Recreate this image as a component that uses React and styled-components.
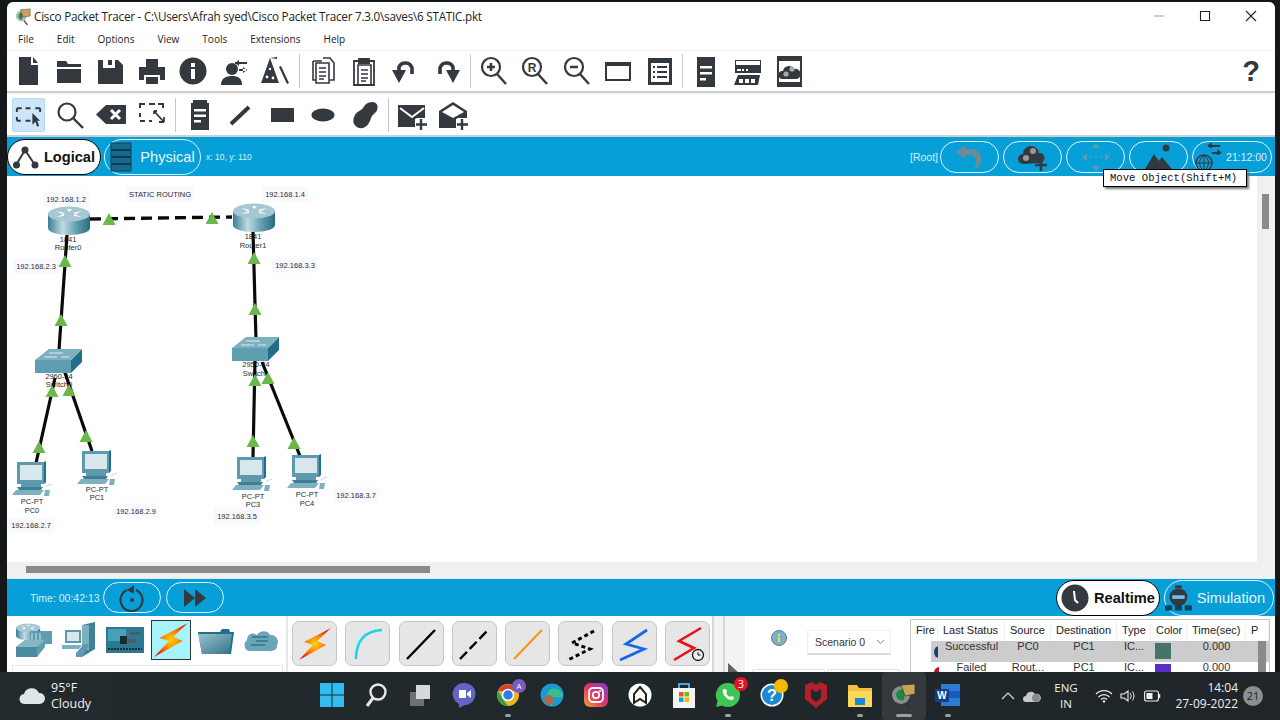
import React from 'react'
import styled, { createGlobalStyle } from 'styled-components'

const INK = '#33393f'
const BLUE = '#079fd8'
const UI = '"Open Sans", "Noto Sans", sans-serif'
const ARIAL = '"Liberation Sans", Arial, sans-serif'

const GlobalStyle = createGlobalStyle`
    html, body { margin: 0; padding: 0; background: #14181b; overflow: hidden; }
    * { box-sizing: border-box; }
`

const Screen = styled.div`
    position: relative;
    width: 1280px;
    height: 720px;
    display: flex;
    flex-direction: column;
    background: #14181b;
    overflow: hidden;
`
const Win = styled.div`
    height: 670px;
    margin: 2px 5px 0 7px;
    background: #fff;
    border-radius: 6px 6px 0 0;
    display: flex;
    flex-direction: column;
    overflow: hidden;
`
const TitleBar = styled.div`
    height: 26px;
    flex: none;
    display: flex;
    align-items: center;
    padding: 2px 0 0 8px;
    font: 11.7px ${UI};
    color: #222;
    letter-spacing: -0.02em;
    span { margin-left: 2px; flex: 1; white-space: nowrap; }
`
const WinControls = styled.div`
    display: flex;
    gap: 34px;
    width: 122px;
    flex: none;
    svg { display: block; }
`
const MenuBar = styled.div`
    height: 22px;
    flex: none;
    display: flex;
    align-items: center;
    gap: 23px;
    padding: 0 0 0 11px;
    font: 10px ${UI};
    color: #222;
`
const ToolRow = styled.div`
    height: ${p => p.$h}px;
    flex: none;
    display: flex;
    align-items: center;
    border-top: 1px solid #f1f1f1;
    border-bottom: 2px solid #cfcfcf;
`
const ToolSlot = styled.div`
    width: 41.3px;
    height: 34px;
    flex: none;
    display: flex;
    align-items: center;
    justify-content: center;
    border-radius: 2px;
    background: ${p => (p.$active ? '#cce5f8' : 'transparent')};
    border: 1px solid ${p => (p.$active ? '#b5d9f2' : 'transparent')};
`
const ActiveSlot = styled(ToolSlot)`
    width: 33px;
    margin: 0 4px 0 5px;
`
const ToolSep = styled.div`
    width: 1px;
    height: 34px;
    margin: 0 2.5px;
    background: #c9c9c9;
    flex: none;
`
const HelpMark = styled.div`
    margin-left: auto;
    margin-right: 15px;
    font: bold 29px ${ARIAL};
    color: ${INK};
`
const BlueBar = styled.div`
    height: ${p => p.$h}px;
    flex: none;
    background: ${BLUE};
    display: flex;
    align-items: center;
    color: #d8f1fb;
    font: 10px ${ARIAL};
`
const Pill = styled.div`
    width: ${p => p.$w}px;
    height: ${p => p.$h}px;
    flex: none;
    display: flex;
    align-items: center;
    justify-content: center;
    gap: 5px;
    border-radius: 19px;
    border: 1.5px solid ${p => (p.$on ? '#000' : '#dff3fb')};
    background: ${p => (p.$on ? '#fff' : 'transparent')};
    color: ${p => (p.$on ? '#111' : '#e6f7fd')};
    font: ${p => (p.$on ? 'bold' : 'normal')} 14.6px ${ARIAL};
    white-space: nowrap;
`
const PhysicalPill = styled(Pill)`
    margin-left: 3px;
    gap: 8px;
`
const SimulationPill = styled(Pill)`
    padding-right: 8px;
`
const Coords = styled.span`
    margin-left: 5px;
    font-size: 8.5px;
`
const RightGroup = styled.div`
    margin-left: auto;
    margin-right: 3px;
    display: flex;
    align-items: center;
    gap: 4px;
`
const RootLabel = styled.span`
    font-size: 10.5px;
    margin-right: -2px;
`
const ClockText = styled.span`
    font-size: 10.5px;
    margin: 0 4px 0 -2px;
    color: #d8f1fb;
`
const Workspace = styled.div`
    flex: 1;
    min-height: 0;
    display: grid;
    grid-template-columns: 1fr 18px;
    grid-template-rows: 1fr 17px;
`
const Canvas = styled.div`
    grid-column: 1;
    grid-row: 1;
    position: relative;
    background: #fff;
    overflow: hidden;
`
const VScroll = styled.div`
    grid-column: 2;
    grid-row: 1 / 3;
    background: #f0f0f0;
    padding: 18px 0 0 5px;
    div { width: 7px; height: 35px; background: #8a8a8a; }
`
const HScroll = styled.div`
    grid-column: 1;
    grid-row: 2;
    background: #f0f0f0;
    padding: 4px 0 0 19px;
    border-bottom: 1px solid #dfe9ee;
    div { width: 404px; height: 7px; background: #8a8a8a; }
`
const Wires = styled.svg`
    position: absolute;
    left: 0;
    top: 0;
    z-index: 2;
`
const DeviceNode = styled.div`
    position: absolute;
    left: ${p => p.$x - 7}px;
    top: ${p => p.$y - 176}px;
    transform: translate(-50%, -50%);
    line-height: 0;
    z-index: 3;
`
const DeviceLabel = styled.div`
    position: absolute;
    left: ${p => p.$x - 7}px;
    top: ${p => p.$y - 176}px;
    transform: translate(-50%, -50%);
    font: 7.5px ${ARIAL};
    color: #2c2c2c;
    white-space: nowrap;
    z-index: 1;
`
const NoteLabel = styled(DeviceLabel)`
    background: #f8f8ff;
    padding: 3px 3px;
`
const TimeText = styled.span`
    margin-left: 23px;
    margin-right: 3px;
    font-size: 10.5px;
`
const PlayGroup = styled.div`
    display: flex;
    gap: 5px;
`
const ModeGroup = styled.div`
    margin-left: auto;
    margin-right: 1px;
    display: flex;
    gap: 4px;
`
const BottomPanel = styled.div`
    height: 56px;
    flex: none;
    display: flex;
    overflow: hidden;
`
const DevicePicker = styled.div`
    width: 281px;
    flex: none;
    padding: 3px 0 0 5px;
    border-right: 2px solid #e6e6e6;
`
const TypeRow = styled.div`
    display: flex;
    height: 41px;
    align-items: center;
`
const TypeSlot = styled.div`
    width: 45.4px;
    height: 40px;
    display: flex;
    align-items: center;
    justify-content: center;
    flex: none;
`
const TypeActive = styled.div`
    width: 40px;
    height: 40px;
    flex: none;
    margin: 0 2.7px;
    display: flex;
    align-items: center;
    justify-content: center;
    background: #a5f3fb;
    border: 1px solid #333;
`
const SubList = styled.div`
    margin: 5px 0 0 0;
    width: 271px;
    height: 20px;
    border: 1px solid #e9e9e9;
`
const ConnPicker = styled.div`
    width: 424px;
    flex: none;
    display: flex;
    gap: 8.3px;
    padding: 5px 0 0 4px;
`
const ConnButton = styled.div`
    width: 45px;
    height: 45px;
    flex: none;
    display: flex;
    align-items: center;
    justify-content: center;
    background: #e6e6e6;
    border: 1px solid #c6c6c6;
    border-radius: 7px;
`
const GripStrip = styled.div`
    width: 13px;
    flex: none;
    background: #f4f4f4;
    border-left: 2px solid #d6d6d6;
    border-right: 2px solid #d6d6d6;
`
const HatchStrip = styled.div`
    position: relative;
    width: 20px;
    flex: none;
    background: #f3f3f3;
    svg { position: absolute; left: 3px; bottom: 0; }
`
const ScenarioPane = styled.div`
    width: 165px;
    flex: none;
    padding: 14px 0 0 26px;
    display: flex;
    align-items: flex-start;
    flex-wrap: wrap;
`
const ScenarioSelect = styled.div`
    width: 84px;
    height: 25px;
    margin-left: 20px;
    display: flex;
    align-items: center;
    justify-content: space-between;
    padding: 0 5px 0 7px;
    font: 10.5px ${ARIAL};
    color: #333;
    border: 1px solid #f0f0f0;
    border-bottom: 2px solid #dcdcdc;
`
const BlankBoxes = styled.div`
    display: flex;
    gap: 2px;
    margin: 14px 0 0 -19px;
    div { width: 73px; height: 20px; border: 1px solid #e3e3e3; border-radius: 2px 2px 0 0; }
`
const EventTable = styled.div`
    width: 360px;
    margin: 3px 0 0 0;
    border: 1px solid #c9c9c9;
    border-bottom: 0;
    position: relative;
    display: grid;
    grid-template-columns: 27px 67px 46px 66px 34px 36px 59px 1fr;
    grid-template-rows: 21px 21px 12px;
    font: 11px ${ARIAL};
    color: #333;
    overflow: hidden;
`
const HeadCell = styled.div`
    padding: 4px 0 0 5px;
    white-space: nowrap;
    overflow: hidden;
    border-right: 1px solid #f0f0f0;
    color: #222;
`
const DataCell = styled.div`
    text-align: center;
    white-space: nowrap;
    line-height: 10px;
    background: ${p => (p.$sel ? '#cccccc' : 'transparent')};
`
const SelFire = styled.div`
    padding: 5px 0 0 23px;
    line-height: 0;
    background: linear-gradient(90deg, transparent 20px, ${p => (p.$sel ? '#ccc' : 'transparent')} 20px);
`
const Swatch = styled.div`
    width: 16px;
    height: 16px;
    margin: 2px 0 0 4px;
    background: ${p => p.$c};
`
const SwatchCell = styled(DataCell)`
    text-align: left;
`
const TableThumb = styled.div`
    position: absolute;
    right: 3px;
    top: 21px;
    width: 8px;
    height: 36px;
    background: #8a8a8a;
`
const Tip = styled.div`
    position: absolute;
    left: 1103px;
    top: 169px;
    width: 144px;
    height: 18px;
    background: #fff;
    border: 1px solid #000;
    box-shadow: 2px 2px 2px #777;
    font: 10.6px "Liberation Mono", monospace;
    color: #111;
    display: flex;
    align-items: center;
    padding-left: 6px;
    z-index: 9;
    white-space: nowrap;
`
const Taskbar = styled.div`
    height: 48px;
    flex: none;
    display: grid;
    grid-template-columns: 310px 660px 1fr;
    background: linear-gradient(90deg, #232a2d, #20282b 40%, #1f2528);
    color: #f0f0f0;
    font: 12px ${UI};
`
const Weather = styled.div`
    display: flex;
    align-items: center;
    padding-left: 19px;
    gap: 6px;
    line-height: 16px;
    font-size: 12.5px;
`
const AppRow = styled.div`
    display: flex;
`
const AppSlot = styled.div`
    position: relative;
    width: 44px;
    height: 48px;
    display: flex;
    align-items: center;
    justify-content: center;
    padding-bottom: 3px;
    background: ${p => (p.$active ? '#33393c' : 'transparent')};
    border-radius: 4px;
    &::after {
        content: '';
        display: ${p => (p.$dot ? 'block' : 'none')};
        position: absolute;
        bottom: 3px;
        left: 50%;
        transform: translateX(-50%);
        width: ${p => (p.$active ? 16 : 6)}px;
        height: 3px;
        border-radius: 2px;
        background: #9aa0a3;
    }
`
const Badge = styled.div`
    position: absolute;
    right: ${p => p.$r}px;
    top: ${p => p.$t}px;
    min-width: 14px;
    height: 14px;
    border-radius: 50%;
    background: ${p => p.$bg};
    color: #fff;
    font: 11px/14px ${UI};
    text-align: center;
`
const SmallBadge = styled(Badge)`
    font-size: 8px;
`
const Tray = styled.div`
    display: flex;
    align-items: center;
    padding-left: 26px;
`
const LangBox = styled.div`
    width: 44px;
    text-align: center;
    font-size: 11.5px;
    line-height: 16px;
`
const TrayIcon = styled.div`
    width: 24px;
    display: flex;
    justify-content: center;
    flex: none;
`
const WifiIcon = styled(TrayIcon)`
    margin-left: 4px;
`
const Clock = styled.div`
    width: 72px;
    margin-left: 2px;
    text-align: right;
    font-size: 12px;
    line-height: 16px;
`
const CountDot = styled.div`
    width: 20px;
    height: 20px;
    margin-left: 5px;
    border-radius: 50%;
    background: #8b8f91;
    color: #1b1f22;
    font: 11px/20px ${UI};
    text-align: center;
`

const Ico = ({ s = 32, w, h, children, fill = INK }) => (
    <svg width={w || s} height={h || s} viewBox={`0 0 ${w || s} ${h || s}`} fill={fill}>{children}</svg>
)

const Lens = ({ children }) => (
    <Ico>
        <circle cx="13" cy="12" r="9" fill="none" stroke={INK} strokeWidth="2.2" />
        <path d="M19 19l9 10" stroke={INK} strokeWidth="2.4" />
        {children}
    </Ico>
)
const OutlineDoc = () => (
    <g fill="none" stroke={INK} strokeWidth="1.6">
        <path d="M8 9h13v20H8z" />
        <path d="M11 14h7M11 18h7M11 22h7M11 25h5" strokeWidth="1.3" />
    </g>
)

const mainTools = [
    <Ico><path d="M7 2h12v8h7v20H7z" /><path d="M21 2l5 6h-5z" /></Ico>,
    <Ico><path d="M4 6h9l2 3h13v3H4z" /><path d="M4 14h24v14H4z" /></Ico>,
    <Ico><path d="M4 5h5v8h12V5h3l5 5v19H4z" /><path d="M14 5h4v5h-4z" /></Ico>,
    <Ico><path d="M10 4h12v8H10zM3 12h26v13h-5v-5H8v5H3z" /><path d="M10 22h12v7H10z" /></Ico>,
    <Ico><circle cx="16" cy="16" r="13.5" /><rect x="14" y="14" width="4" height="10" fill="#fff" /><rect x="14" y="8" width="4" height="4" fill="#fff" /></Ico>,
    <Ico><circle cx="14" cy="14" r="6" /><path d="M3 30c0-7 5-9 11-9s10 2 10 9z" /><path d="M17 7h12v2H17zM17 8l4-3v6zM21 14h8v2h-8zM29 15l-4-3v6z" /></Ico>,
    <Ico><path d="M11 3l9 25H2z" /><circle cx="11" cy="14" r="1.2" fill="#fff" /><circle cx="8" cy="22" r="1.4" fill="#fff" /><circle cx="14" cy="23" r="1.4" fill="#fff" /><path d="M11 3l7-1v2z" /><path d="M20 12l2-1 8 17-2 1z" /></Ico>,
    <Ico><g fill="none" stroke={INK} strokeWidth="1.6"><path d="M6 6h9M6 6v19h3" /><path d="M16 3h7l4 5v17h-4" /></g><g transform="translate(1 -1)"><OutlineDoc /></g></Ico>,
    <Ico><g fill="none" stroke={INK} strokeWidth="1.8"><path d="M6 6h20v24H6z" /><path d="M11 4h10v4H11z" fill={INK} /></g><g transform="translate(2 1)"><OutlineDoc /></g></Ico>,
    <Ico><path d="M23 19v-6a7 7 0 0 0-13-1v4" fill="none" stroke={INK} strokeWidth="3.6" /><path d="M3 15h14l-7 13z" /></Ico>,
    <Ico><path d="M9 19v-6a7 7 0 0 1 13-1v4" fill="none" stroke={INK} strokeWidth="3.6" /><path d="M15 15h14l-7 13z" /></Ico>,
    <Lens><path d="M9 12h8M13 8v8" stroke={INK} strokeWidth="2.6" /></Lens>,
    <Lens><text x="13" y="16.5" textAnchor="middle" fontFamily={ARIAL} fontWeight="bold" fontSize="12" fill={INK}>R</text></Lens>,
    <Lens><path d="M9 12h8" stroke={INK} strokeWidth="2.6" /></Lens>,
    <Ico><path d="M4 8h24v17H4z" fill="none" stroke={INK} strokeWidth="2" /><path d="M4 8h24v3H4z" /></Ico>,
    <Ico><path d="M5 3h24v27H5z" fill={INK} /><path d="M8 8h18v19H8z" fill="#fff" /><path d="M10 11h2v2h-2zM14 11h10v2H14zM10 16h2v2h-2zM14 16h10v2H14zM10 21h2v2h-2zM14 21h10v2H14z" /></Ico>,
    <Ico><path d="M7 2h18v30H7z" /><path d="M10 11h12v2.5H10zM10 17h12v2.5H10zM10 23h6v2.5h-6z" fill="#fff" /></Ico>,
    <Ico><path d="M3 5h26v13H3z" /><path d="M4 6h24v4H4z" fill="#fff" /><path d="M5 14h4v2H5zM10 14h2v2h-2zM14 14h2v2h-2z" fill="#fff" /><path d="M6 20h22l-2 10H2z" /><path d="M7 24h4v4H7zM13 24h4v4h-4zM19 24h4v4h-4z" fill="#fff" /></Ico>,
    <Ico><path d="M4 1h25v31H4z" /><path d="M6 6h21v21H6z" fill="#fff" /><path d="M9 24a4 4 0 0 1 1-8 6 6 0 0 1 11-2 5 5 0 0 1 3 10z" /><circle cx="19" cy="14" r="2.6" fill="#aaa" /><circle cx="13" cy="19" r="2.6" fill="#aaa" /></Ico>,
]

const subTools = [
    <Ico><path d="M13 9h5M23 9h5M4 9h5M4 9v4M4 18v4M4 22h4M13 22h5" fill="none" stroke={INK} strokeWidth="2" /><path d="M28 9v4" stroke={INK} strokeWidth="2" /><path d="M20 14l8 8-3 0 2 5-2 1-2-5-3 3z" /></Ico>,
    <Ico><circle cx="13" cy="13" r="8.5" fill="none" stroke={INK} strokeWidth="2.2" /><path d="M19 19l10 10" stroke={INK} strokeWidth="2.4" /></Ico>,
    <Ico><path d="M11 6h20v19H11L1 15.5z" /><path d="M16 11l9 9M25 11l-9 9" stroke="#fff" strokeWidth="3" /></Ico>,
    <Ico><path d="M13 5h6M22 5h5v4M4 9V5h5M4 14v4M4 22h5M13 22h3" fill="none" stroke={INK} strokeWidth="2" /><path d="M18 12l10 11M28 23v-5M28 23h-5M18 12v3M18 12h3" fill="none" stroke={INK} strokeWidth="1.8" /></Ico>,
    <Ico><path d="M7 1h18v30H7z" /><path d="M10 10h12v2.5H10zM10 15.5h12V18H10zM10 21h7v2.5h-7z" fill="#fff" /><path d="M7 1h2v3H7zM23 1h2v3h-2z" fill="#fff" /></Ico>,
    <Ico><path d="M6 25L24 8" stroke={INK} strokeWidth="4" /></Ico>,
    <Ico><path d="M5 9h23v14H5z" /></Ico>,
    <Ico><ellipse cx="16" cy="16" rx="11.5" ry="6.5" /></Ico>,
    <Ico><path d="M23 3c6 0 7 6 4 10-2 2-4 3-5 6-2 7-6 11-12 10-6-2-7-8-4-13 2-4 6-4 8-7 2-4 5-6 9-6z" /></Ico>,
]
const subMail = [
    <Ico><path d="M2 6h27v22H2z" /><path d="M4 9l12 9 12-9" fill="none" stroke="#fff" strokeWidth="2" /><path d="M21 19h11v13H19V20z" fill="#fff" /><path d="M25 20v11M20 25.5h11" stroke={INK} strokeWidth="2.4" /></Ico>,
    <Ico><path d="M2 12L16 3l14 9v17H2z" /><path d="M16 6L5 13l11 6 11-6z" fill="#fff" /><path d="M21 19h11v13H19V20z" fill="#fff" /><path d="M25 20v11M20 25.5h11" fill="none" stroke={INK} strokeWidth="2.4" /></Ico>,
]

const tri = [[109, 219], [212, 218], [65, 261], [61, 320], [254, 258], [255, 309], [52, 391], [69, 390], [39, 447], [86, 436], [255, 380], [268, 378], [253, 441], [294, 443]]
const solid = [[67, 235, 59, 350], [253, 232, 256, 340], [55, 378, 36, 463], [64, 370, 92, 451], [255, 360, 253, 457], [262, 362, 300, 456]]

const notes = [
    ['192.168.1.2', 66, 199], ['STATIC ROUTING', 160, 194], ['192.168.1.4', 285, 194],
    ['192.168.2.3', 36, 266], ['192.168.3.3', 295, 265], ['192.168.2.7', 31, 525],
    ['192.168.2.9', 136, 511], ['192.168.3.5', 237, 516], ['192.168.3.7', 356, 495],
]
const labels = [
    ['1841', 68, 239], ['Router0', 68, 247], ['1841', 253, 236], ['Router1', 253, 245],
    ['2960-24', 59, 376], ['Switch0', 59, 384], ['2950-24', 256, 364], ['Switch1', 256, 373],
    ['PC-PT', 32, 501], ['PC0', 32, 510], ['PC-PT', 97, 489], ['PC1', 97, 497],
    ['PC-PT', 253, 496], ['PC3', 253, 504], ['PC-PT', 307, 494], ['PC4', 307, 503],
]

const Defs = styled.svg`
    position: absolute;
`
const Gradients = () => (
    <Defs width="0" height="0">
        <defs>
            <linearGradient id="metal" x1="0" x2="1" y1="0" y2="0">
                <stop offset="0" stopColor="#3e7f93" />
                <stop offset=".35" stopColor="#bfdbe2" />
                <stop offset=".7" stopColor="#5d9aae" />
                <stop offset="1" stopColor="#2a6a80" />
            </linearGradient>
            <linearGradient id="teal" x1="0" x2="1" y1="0" y2="1">
                <stop offset="0" stopColor="#9cc2cf" />
                <stop offset="1" stopColor="#2f7288" />
            </linearGradient>
            <radialGradient id="bolt" cx=".5" cy=".5" r=".55">
                <stop offset="0" stopColor="#ffd400" />
                <stop offset=".45" stopColor="#ff8a00" />
                <stop offset="1" stopColor="#e01a10" />
            </radialGradient>
        </defs>
    </Defs>
)

const Router = ({ w = 42, h = 30 }) => (
    <svg width={w} height={h} viewBox="0 0 42 30">
        <path d="M0 8v14c0 4 9 7 21 7s21-3 21-7V8z" fill="url(#metal)" />
        <ellipse cx="21" cy="8" rx="21" ry="7.5" fill="#a7c8d3" />
        <path d="M8 5l9 2-3 1zM34 5l-9 2 3 1zM8 11l8-3 0 2zM34 11l-8-3 0 2zM19 3h5l-3 3z" fill="#fff" />
    </svg>
)
const Switch = () => (
    <svg width="48" height="26" viewBox="0 0 48 26">
        <path d="M0 12h36v13H0z" fill="#5f9db1" />
        <path d="M36 12l11-11v13L36 25z" fill="#1f6f8a" />
        <path d="M0 12L14 1h33L36 12z" fill="#7fb0c0" />
        <path d="M14 5h14M22 9H9M26 9h8" stroke="#e6f3f7" strokeWidth=".9" />
    </svg>
)
const Pc = () => (
    <svg width="40" height="38" viewBox="0 0 40 38">
        <path d="M5 1h27v22H5z" fill="#5f99ad" />
        <path d="M32 1l2-1v21l-2 2z" fill="#1f6f8a" />
        <path d="M8 4h22v15H8z" fill="#d8e7ec" />
        <path d="M9 23h20v3H9z" fill="#5f99ad" />
        <path d="M5 26h26l-2 3H7z" fill="#3f8096" />
        <path d="M4 29h28l-4 5H0z" fill="#7fb0c0" />
        <path d="M33 29h5l-1 6h-5z" fill="#7fb0c0" />
        <path d="M34 26c2-2 4-2 6-3" stroke="#bbb" fill="none" strokeWidth=".7" />
    </svg>
)
const Bolt = ({ s = 34 }) => (
    <svg width={s} height={s} viewBox="0 0 34 34">
        <path d="M33 1L6 15l9 3L1 33l27-15-9-4z" fill="url(#bolt)" />
    </svg>
)

const typeIcons = [
    <svg width="38" height="36" viewBox="0 0 38 36"><g transform="scale(.58) translate(0 2)"><Router /></g><path d="M14 9h22v13H14z" fill="#5f9db1" /><path d="M16 11v9M20 11v9M24 11v9" stroke="#cfe3ea" strokeWidth="1" /><path d="M0 25L9 18h20v7l-8 10H0z" fill="#5f9db1" /><path d="M0 25h21v10H0z" fill="#4b8aa0" /><path d="M0 25L9 18h20l-8 7z" fill="#89b6c5" /></svg>,
    <svg width="36" height="38" viewBox="0 0 36 38"><path d="M20 4l13-3v27l-13 8z" fill="#3f8096" /><path d="M20 4h7v25h-7z" fill="#7fb0c0" /><path d="M3 9h16v13H3z" fill="#5f99ad" /><path d="M5 11h12v9H5z" fill="#d8e7ec" /><path d="M0 24h20l-3 4H0z" fill="#7fb0c0" /><path d="M14 32l8-9h6l-8 13h-6z" fill="#5f99ad" /></svg>,
    <svg width="38" height="26" viewBox="0 0 38 26"><path d="M0 0h38v26H0z" fill="#2c7a92" /><path d="M2 2h18v12H2z" fill="#46a0b8" /><path d="M14 9h7v8h-7z" fill="#1b2a30" /><path d="M24 5h10v3H24zM22 12h8v4h-8z" fill="#4f5d63" /><path d="M2 22h34" stroke="#1b2a30" strokeWidth="2" strokeDasharray="2 1" /></svg>,
]
const typeIconsAfter = [
    <svg width="36" height="28" viewBox="0 0 36 28"><path d="M0 6h22l2-3h7l1 3h4l-3 22H4z" fill="#1f6f8a" /><path d="M0 8h34l-3 20H4z" fill="url(#teal)" /></svg>,
    <svg width="36" height="26" viewBox="0 0 36 26"><path d="M6 24C0 24-1 16 3 13c0-6 6-8 10-5 3-5 11-5 13 0 6-1 10 6 7 10 1 4-4 7-9 6z" fill="#6ba5b9" /><path d="M8 10h16M12 14h12M7 18h14" stroke="#3f8096" strokeWidth="2" /></svg>,
]

const connIcons = [
    <Bolt />,
    <svg width="34" height="34"><path d="M5 32C5 14 14 4 31 3" fill="none" stroke="#22d3e8" strokeWidth="2.6" /></svg>,
    <svg width="34" height="34"><path d="M3 32L31 3" stroke="#000" strokeWidth="2.4" /></svg>,
    <svg width="34" height="34"><path d="M3 32L31 3" stroke="#000" strokeWidth="2.4" strokeDasharray="10 4" /></svg>,
    <svg width="34" height="34"><path d="M3 32L31 3" stroke="#f09a16" strokeWidth="2.2" /></svg>,
    <svg width="34" height="34"><path d="M30 4L8 16l18 6L4 33" fill="none" stroke="#000" strokeWidth="3" strokeDasharray="4 3" /></svg>,
    <svg width="34" height="34"><path d="M30 3L9 17l18 5L3 33" fill="none" stroke="#1668e8" strokeWidth="2.8" /></svg>,
    <svg width="34" height="36"><path d="M30 2L8 15l15 7L3 34" fill="none" stroke="#ea1212" strokeWidth="2.6" /><circle cx="27" cy="29" r="5.5" fill="#eee" stroke="#111" strokeWidth="1.3" /><path d="M27 26v3h2.5" fill="none" stroke="#111" /></svg>,
]

const apps = [
    { icon: <svg width="24" height="24"><path d="M0 0h11.5v11.5H0zM12.5 0H24v11.5H12.5zM0 12.5h11.5V24H0zM12.5 12.5H24V24H12.5z" fill="#32bdf2" /></svg> },
    { icon: <svg width="24" height="26"><circle cx="14" cy="10" r="7.5" fill="none" stroke="#e8e8e8" strokeWidth="2.4" /><path d="M9 16l-6 8" stroke="#e8e8e8" strokeWidth="3" /></svg> },
    { icon: <svg width="24" height="24"><path d="M2 9h14v14H2z" fill="#6d6f71" /><path d="M8 2h14v14H8z" fill="#d8d8d8" /></svg> },
    { icon: <svg width="24" height="26"><path d="M12 1a11 11 0 0 1 1 22l-6 3v-4A11 11 0 0 1 12 1z" fill="#6264c7" /><path d="M7 8h7v8H7zM15 11l4-3v8l-4-3z" fill="#fff" /></svg> },
    {
        dot: true,
        icon: <svg width="24" height="24" viewBox="0 0 24 24"><circle cx="12" cy="12" r="11" fill="#e8b51f" /><path d="M2 8a11 11 0 0 1 20 0H12z" fill="#dc3f32" /><path d="M2 8l6 10 4 5A11 11 0 0 1 2 8z" fill="#2f9e4c" /><circle cx="12" cy="12" r="5.5" fill="#2f7de8" stroke="#fff" strokeWidth="1.5" /></svg>,
        badge: <SmallBadge $r={4} $t={7} $bg="#7a5cc0">A</SmallBadge>,
    },
    { icon: <svg width="24" height="24" viewBox="0 0 24 24"><circle cx="12" cy="12" r="11.5" fill="#1c9ad0" /><path d="M23 13c-1-6-7-9-12-7-4 2-5 7-3 12 1 3 3 5 5 5-4-4-3-9 2-9 4 0 7 1 8-1z" fill="#35c08c" /><circle cx="9" cy="17" r="5" fill="#a66a55" /></svg> },
    { icon: <svg width="24" height="24" viewBox="0 0 24 24"><defs><linearGradient id="ig" x1="0" y1="1" x2="1" y2="0"><stop offset="0" stopColor="#f9a02c" /><stop offset=".5" stopColor="#e1306c" /><stop offset="1" stopColor="#7a3fd1" /></linearGradient></defs><rect width="24" height="24" rx="6" fill="url(#ig)" /><rect x="5" y="5" width="14" height="14" rx="4" fill="none" stroke="#fff" strokeWidth="1.8" /><circle cx="12" cy="12" r="3.2" fill="none" stroke="#fff" strokeWidth="1.8" /><circle cx="16" cy="8" r="1" fill="#fff" /></svg> },
    { icon: <svg width="24" height="24" viewBox="0 0 24 24"><circle cx="12" cy="12" r="11.5" fill="#fff" /><path d="M12 4l6 7v9l-6-4-6 4v-9z" fill="none" stroke="#222" strokeWidth="2" /></svg> },
    { icon: <svg width="24" height="26" viewBox="0 0 24 26"><path d="M1 6h22v20H1z" fill="#f4f4f4" /><path d="M7 6V2h10v4" fill="none" stroke="#4aa8e0" strokeWidth="2" /><path d="M7 10h4.500v4.500H7z" fill="#f25022" /><path d="M12.500 10H17v4.500h-4.500z" fill="#7fba00" /><path d="M7 15.500h4.500V20H7z" fill="#00a4ef" /><path d="M12.500 15.500H17V20h-4.500z" fill="#ffb900" /></svg> },
    {
        dot: true,
        icon: <svg width="26" height="26" viewBox="0 0 26 26"><path d="M13 1a12 12 0 0 1 0 24c-2 0-4-.5-6-1.500L1 25l1.500-6A12 12 0 0 1 13 1z" fill="#3ec654" /><path d="M8 7c-2 4 4 12 10 11l1-3-3-1-1 1c-2-1-3-2-4-4l1-1-1-3z" fill="#fff" /></svg>,
        badge: <Badge $r={2} $t={5} $bg="#e81123">3</Badge>,
    },
    {
        icon: <svg width="24" height="24" viewBox="0 0 24 24"><circle cx="12" cy="12" r="11.500" fill="#fff" /><circle cx="12" cy="12" r="10" fill="#1a8ad4" /><text x="12" y="18" textAnchor="middle" fontFamily={ARIAL} fontWeight="bold" fontSize="16" fill="#fff">?</text></svg>,
        badge: <Badge $r={6} $t={7} $bg="#f8b800" />,
    },
    { icon: <svg width="22" height="26" viewBox="0 0 22 26"><path d="M0 3l7-3 4 3 4-3 7 3v14l-11 9L0 17z" fill="#b3202a" /><path d="M6 7l5 3 5-3v9l-5 4-5-4z" fill="#22282b" /></svg> },
    { dot: true, icon: <svg width="26" height="24" viewBox="0 0 26 24"><path d="M1 2h9l2 3h13v19H1z" fill="#f5c03e" /><path d="M1 8h24v16H1z" fill="#fbd75b" /><path d="M8 15h10v7H8z" fill="#1b87d8" /></svg> },
    { dot: true, active: true, icon: <svg width="26" height="28" viewBox="0 0 26 28"><circle cx="10" cy="14" r="9" fill="#8e8e8e" /><path d="M5 14a6 6 0 0 1 9-5l-1 10a6 6 0 0 1-8-5z" fill="#1b8a3a" /><path d="M10 4l14-1v10l-10 2z" fill="#c9a25a" stroke="#222" strokeWidth=".6" /><path d="M15 22l5 6" stroke="#333" strokeWidth="2" /></svg> },
    { dot: true, icon: <svg width="26" height="24" viewBox="0 0 26 24"><path d="M6 1h19v22H6z" fill="#2b7cd3" /><path d="M6 8h19v7H6z" fill="#185abd" /><path d="M0 6h14v13H0z" fill="#103f91" /><text x="7" y="16" textAnchor="middle" fontFamily={ARIAL} fontWeight="bold" fontSize="10" fill="#fff">W</text></svg> },
]

const heads = ['Fire', 'Last Status', 'Source', 'Destination', 'Type', 'Color', 'Time(sec)', 'P']

const EventRow = ({ status, source, color, sel, fire }) => (
    <>
        <SelFire $sel={sel}>
            <svg width="5" height="12"><path d="M5 0a5 6 0 0 0 0 12z" fill={fire} /></svg>
        </SelFire>
        <DataCell $sel={sel}>{status}</DataCell>
        <DataCell $sel={sel}>{source}</DataCell>
        <DataCell $sel={sel}>PC1</DataCell>
        <DataCell $sel={sel}>IC...</DataCell>
        <SwatchCell $sel={sel}><Swatch $c={color} /></SwatchCell>
        <DataCell $sel={sel}>0.000</DataCell>
        <DataCell $sel={sel} />
    </>
)

const App = () => {
    return (
        <Screen>
            <GlobalStyle />
            <Gradients />
            <Win>
                <TitleBar>
                    <svg width="17" height="19" viewBox="0 0 19 19">
                        <circle cx="7" cy="9" r="6" fill="#b8b8b8" />
                        <path d="M4 9a4 4 0 0 1 5-4l-1 8a4 4 0 0 1-4-4z" fill="#1b8a3a" />
                        <path d="M6 2l11-1v8l-8 1z" fill="#c9a25a" stroke="#333" strokeWidth=".5" />
                        <path d="M10 14l4 5" stroke="#555" strokeWidth="1.500" />
                    </svg>
                    <span>Cisco Packet Tracer - C:\Users\Afrah syed\Cisco Packet Tracer 7.3.0\saves\6 STATIC.pkt</span>
                    <WinControls>
                        <svg width="12" height="12"><path d="M1 6h10" stroke="#999" strokeWidth="1.200" /></svg>
                        <svg width="12" height="12"><path d="M1.500 1.500h9v9h-9z" fill="none" stroke="#222" strokeWidth="1.100" /></svg>
                        <svg width="12" height="12"><path d="M1 1l10 10M11 1L1 11" stroke="#222" strokeWidth="1.100" /></svg>
                    </WinControls>
                </TitleBar>
                <MenuBar>
                    {['File', 'Edit', 'Options', 'View', 'Tools', 'Extensions', 'Help'].map(m => <span key={m}>{m}</span>)}
                </MenuBar>
                <ToolRow $h={43}>
                    {mainTools.slice(0, 7).map((t, i) => <ToolSlot key={i}>{t}</ToolSlot>)}
                    <ToolSep />
                    {mainTools.slice(7, 11).map((t, i) => <ToolSlot key={i}>{t}</ToolSlot>)}
                    <ToolSep />
                    {mainTools.slice(11, 16).map((t, i) => <ToolSlot key={i}>{t}</ToolSlot>)}
                    <ToolSep />
                    {mainTools.slice(16).map((t, i) => <ToolSlot key={i}>{t}</ToolSlot>)}
                    <HelpMark>?</HelpMark>
                </ToolRow>
                <ToolRow $h={44}>
                    <ActiveSlot $active>{subTools[0]}</ActiveSlot>
                    {subTools.slice(1, 3).map((t, i) => <ToolSlot key={i}>{t}</ToolSlot>)}
                    <ToolSlot>{subTools[3]}</ToolSlot>
                    <ToolSep />
                    {subTools.slice(4).map((t, i) => <ToolSlot key={i}>{t}</ToolSlot>)}
                    <ToolSep />
                    {subMail.map((t, i) => <ToolSlot key={i}>{t}</ToolSlot>)}
                </ToolRow>
                <BlueBar $h={39}>
                    <Pill $w={94} $h={36} $on>
                        <svg width="26" height="24" viewBox="0 0 26 24"><path d="M3 20L12 5l10 15" fill="none" stroke={INK} strokeWidth="2" /><circle cx="12" cy="5" r="3.500" fill={INK} /><circle cx="3.500" cy="20" r="3.500" fill={INK} /><circle cx="22" cy="20" r="3.500" fill={INK} /></svg>
                        Logical
                    </Pill>
                    <PhysicalPill $w={97} $h={36}>
                        <svg width="22" height="30" viewBox="0 0 22 30"><path d="M1 1h20v28H1z" fill="#15688e" stroke="#123f58" /><path d="M1 8h20M1 15h20M1 22h20" stroke="#0c3a50" strokeWidth="2" /></svg>
                        Physical
                    </PhysicalPill>
                    <Coords>x: 10, y: 110</Coords>
                    <RightGroup>
                        <RootLabel>[Root]</RootLabel>
                        <Pill $w={59} $h={32}>
                            <svg width="34" height="28" viewBox="0 0 34 28"><path d="M3 9l9-7v4h6c8 0 11 6 10 12-1 4-3 6-5 8l-2-1c2-3 3-5 2-8-1-4-4-5-7-5h-4v4z" fill="#6f8b95" /></svg>
                        </Pill>
                        <Pill $w={59} $h={32}>
                            <svg width="32" height="30" viewBox="0 0 32 30"><path d="M6 22a5 5 0 0 1 0-10 8 8 0 0 1 8-8 8 8 0 0 1 8 7 5 5 0 0 1 1 10z" fill={INK} /><circle cx="16" cy="9" r="3" fill="#999" /><circle cx="9" cy="16" r="3" fill="#999" /><path d="M24 17v12M18 23h12" stroke={INK} strokeWidth="2.600" /></svg>
                        </Pill>
                        <Pill $w={59} $h={32}>
                            <svg width="28" height="28" viewBox="0 0 28 28" fill="#5b9cb4"><path d="M14 0l4 5h-8zM14 28l4-5h-8zM0 14l5-4v8zM28 14l-5-4v8z" /><circle cx="14" cy="14" r="1.200" /><path d="M8 14h2M18 14h2" stroke="#5b9cb4" /></svg>
                        </Pill>
                        <Pill $w={59} $h={32}>
                            <svg width="28" height="28" viewBox="0 0 28 28" fill={INK}><circle cx="21" cy="5" r="3.500" /><path d="M0 26L9 11l5 7 3-4 10 12z" /></svg>
                        </Pill>
                        <Pill $w={80} $h={32}>
                            <svg width="30" height="30" viewBox="0 0 30 30">
                                <circle cx="11" cy="21" r="8" fill="none" stroke={INK} strokeWidth="1.500" />
                                <path d="M3 21h16M11 13v16M11 13c-6 5-6 11 0 16M11 13c6 5 6 11 0 16" fill="none" stroke={INK} />
                                <path d="M15 4h12M15 4l3-2v4M19 11h9M28 11l-3-2v4" fill="none" stroke={INK} strokeWidth="1.800" />
                            </svg>
                            <ClockText>21:12:00</ClockText>
                        </Pill>
                    </RightGroup>
                </BlueBar>
                <Workspace>
                    <Canvas>
                        <Wires width="1250" height="386" viewBox="7 176 1250 386">
                            <path d="M90 219L232 217" stroke="#0a0a0a" strokeWidth="3.400" strokeDasharray="11 6" />
                            {solid.map((l, i) => <line key={i} x1={l[0]} y1={l[1]} x2={l[2]} y2={l[3]} stroke="#0a0a0a" strokeWidth="3.200" />)}
                            {tri.map(([x, y], i) => <polygon key={i} points={`${x - 6.500},${y + 6} ${x},${y - 6} ${x + 6.500},${y + 6}`} fill="#6cb74a" />)}
                        </Wires>
                        {labels.map(([t, x, y], i) => <DeviceLabel key={i} $x={x} $y={y}>{t}</DeviceLabel>)}
                        {notes.map(([t, x, y], i) => <NoteLabel key={i} $x={x} $y={y}>{t}</NoteLabel>)}
                        <DeviceNode $x={69} $y={221}><Router /></DeviceNode>
                        <DeviceNode $x={254} $y={218}><Router /></DeviceNode>
                        <DeviceNode $x={59} $y={361}><Switch /></DeviceNode>
                        <DeviceNode $x={256} $y={349}><Switch /></DeviceNode>
                        <DeviceNode $x={32} $y={480}><Pc /></DeviceNode>
                        <DeviceNode $x={97} $y={469}><Pc /></DeviceNode>
                        <DeviceNode $x={252} $y={475}><Pc /></DeviceNode>
                        <DeviceNode $x={307} $y={473}><Pc /></DeviceNode>
                    </Canvas>
                    <VScroll><div /></VScroll>
                    <HScroll><div /></HScroll>
                </Workspace>
                <BlueBar $h={37}>
                    <TimeText>Time: 00:42:13</TimeText>
                    <PlayGroup>
                        <Pill $w={58} $h={31}>
                            <svg width="28" height="28" viewBox="0 0 28 28"><path d="M9 6a11 11 0 1 0 9 0" fill="none" stroke={INK} strokeWidth="2.200" /><path d="M16 1l-7 5 7 4z" fill={INK} /><circle cx="14" cy="16" r="2" fill={INK} /></svg>
                        </Pill>
                        <Pill $w={58} $h={31}>
                            <svg width="24" height="18" viewBox="0 0 24 18"><path d="M1 0l11 9L1 18zM12 0l11 9-11 9z" fill={INK} /></svg>
                        </Pill>
                    </PlayGroup>
                    <ModeGroup>
                        <Pill $w={104} $h={36} $on>
                            <svg width="28" height="28" viewBox="0 0 28 28"><circle cx="14" cy="14" r="13.500" fill={INK} /><path d="M13 7l1 9 3 3" fill="none" stroke="#fff" strokeWidth="2" /></svg>
                            Realtime
                        </Pill>
                        <SimulationPill $w={110} $h={36}>
                            <svg width="30" height="30" viewBox="0 0 30 30"><circle cx="15" cy="14" r="10" fill={INK} /><path d="M11 1h8v3h-8z" fill={INK} /><path d="M8 12h14v4H8z" fill="#6cc3e6" /><path d="M0 23h8v6H0zM11 23h8v6h-8zM22 23h8v6h-8z" fill="#123f58" /></svg>
                            Simulation
                        </SimulationPill>
                    </ModeGroup>
                </BlueBar>
                <BottomPanel>
                    <DevicePicker>
                        <TypeRow>
                            {typeIcons.map((t, i) => <TypeSlot key={i}>{t}</TypeSlot>)}
                            <TypeActive><Bolt s={36} /></TypeActive>
                            {typeIconsAfter.map((t, i) => <TypeSlot key={i}>{t}</TypeSlot>)}
                        </TypeRow>
                        <SubList />
                    </DevicePicker>
                    <ConnPicker>
                        {connIcons.map((c, i) => <ConnButton key={i}>{c}</ConnButton>)}
                    </ConnPicker>
                    <GripStrip />
                    <HatchStrip>
                        <svg width="10" height="9"><path d="M0 0l10 9H0z" fill="#5e6468" /></svg>
                    </HatchStrip>
                    <ScenarioPane>
                        <svg width="16" height="16" viewBox="0 0 16 16">
                            <circle cx="8" cy="8" r="7.500" fill="#7fb0c4" stroke="#567f90" />
                            <path d="M7 4h2v2H7zM7 7h2v5H7z" fill="#e8e25a" />
                        </svg>
                        <ScenarioSelect>
                            Scenario 0
                            <svg width="9" height="6"><path d="M1 1l3.500 3.500L8 1" fill="none" stroke="#888" /></svg>
                        </ScenarioSelect>
                        <BlankBoxes><div /><div /></BlankBoxes>
                    </ScenarioPane>
                    <EventTable>
                        {heads.map(h => <HeadCell key={h}>{h}</HeadCell>)}
                        <EventRow status="Successful" source="PC0" color="#45746f" fire="#1a3f6e" sel />
                        <EventRow status="Failed" source="Rout..." color="#5a2dc8" fire="#c0141c" />
                        <TableThumb />
                    </EventTable>
                </BottomPanel>
            </Win>
            <Taskbar>
                <Weather>
                    <svg width="26" height="20" viewBox="0 0 26 20"><path d="M6 18a5 5 0 0 1-1-10 8 8 0 0 1 15-1 5.500 5.500 0 0 1 1 11z" fill="#dfe6ea" /></svg>
                    <div>95°F<br />Cloudy</div>
                </Weather>
                <AppRow>
                    {apps.map((a, i) => (
                        <AppSlot key={i} $dot={a.dot} $active={a.active}>
                            {a.icon}
                            {a.badge}
                        </AppSlot>
                    ))}
                </AppRow>
                <Tray>
                    <TrayIcon><svg width="14" height="8"><path d="M1 7l6-6 6 6" fill="none" stroke="#ddd" strokeWidth="1.200" /></svg></TrayIcon>
                    <TrayIcon><svg width="18" height="14"><path d="M3 13a3 3 0 0 1 0-6 5 5 0 0 1 9-2 4 4 0 0 1 3 8z" fill="#c8c8c8" /><circle cx="13" cy="9" r="4" fill="#888" /></svg></TrayIcon>
                    <LangBox>ENG<br />IN</LangBox>
                    <WifiIcon><svg width="18" height="14" viewBox="0 0 18 14"><path d="M1 5a11 11 0 0 1 16 0M3.500 8a7.500 7.500 0 0 1 11 0M6 10.500a4 4 0 0 1 6 0" fill="none" stroke="#eee" strokeWidth="1.200" /><circle cx="9" cy="12.500" r="1.200" fill="#eee" /></svg></WifiIcon>
                    <TrayIcon><svg width="16" height="14" viewBox="0 0 16 14"><path d="M1 5h3l4-3v10l-4-3H1z" fill="none" stroke="#eee" strokeWidth="1.100" /><path d="M10 4c1.500 2 1.500 4 0 6M12.500 2.500c2 3 2 6 0 9" fill="none" stroke="#eee" /></svg></TrayIcon>
                    <TrayIcon><svg width="17" height="12" viewBox="0 0 17 12"><rect x=".6" y="1" width="13.800" height="10" rx="2" fill="none" stroke="#eee" strokeWidth="1.100" /><rect x="2.500" y="3" width="6" height="6" fill="#eee" /><path d="M15.500 4v4" stroke="#eee" strokeWidth="1.500" /></svg></TrayIcon>
                    <Clock>14:04<br />27-09-2022</Clock>
                    <CountDot>21</CountDot>
                </Tray>
            </Taskbar>
            <Tip>Move Object(Shift+M)</Tip>
        </Screen>
    )
}

export default App
